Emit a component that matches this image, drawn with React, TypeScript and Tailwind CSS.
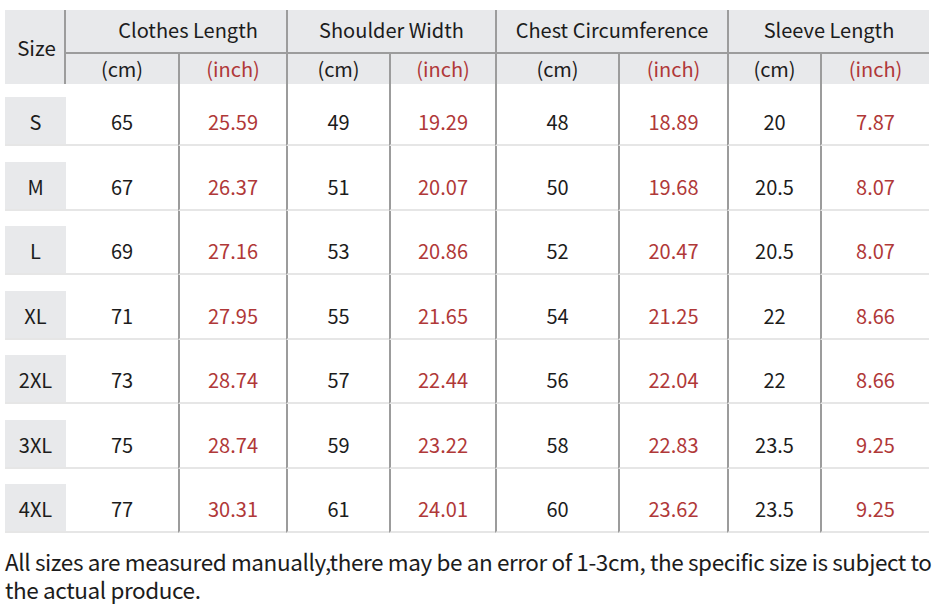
import React from 'react'

const groups = ['Clothes Length', 'Shoulder Width', 'Chest Circumference', 'Sleeve Length']

const rows: [string, string, string, string, string, string, string, string, string][] = [
  ['S', '65', '25.59', '49', '19.29', '48', '18.89', '20', '7.87'],
  ['M', '67', '26.37', '51', '20.07', '50', '19.68', '20.5', '8.07'],
  ['L', '69', '27.16', '53', '20.86', '52', '20.47', '20.5', '8.07'],
  ['XL', '71', '27.95', '55', '21.65', '54', '21.25', '22', '8.66'],
  ['2XL', '73', '28.74', '57', '22.44', '56', '22.04', '22', '8.66'],
  ['3XL', '75', '28.74', '59', '23.22', '58', '22.83', '23.5', '9.25'],
  ['4XL', '77', '30.31', '61', '24.01', '60', '23.62', '23.5', '9.25'],
]

const App = () => {
  return (
    <div
      className="w-[943px] h-[607px] bg-white text-[#1c1c1c] overflow-hidden"
      style={{ fontFamily: '"Noto Sans CJK SC", "Noto Sans", sans-serif' }}
    >
      <div className="ml-[5px] pt-[10px] w-[924px] grid grid-cols-[61px_112px_108px_103px_106px_123px_109px_93px_109px]">
        {/* header */}
        <div className="row-span-2 bg-[#e8e9eb] border-r-2 border-[#9c9c9c] flex items-center justify-center text-[20.5px] pl-[4px]">
          Size
        </div>
        {groups.map((g, i) => (
          <div
            key={g}
            className={`col-span-2 h-[44px] bg-[#e8e9eb] border-b-2 border-[#9c9c9c] flex items-center justify-center text-[20px] pb-[2px] ${i > 0 ? 'border-l-2' : 'pl-[24px]'}`}
          >
            {g}
          </div>
        ))}
        {groups.map((g, i) => (
          <React.Fragment key={g + 'u'}>
            <div
              className={`h-[30px] bg-[#e8e9eb] border-[#9c9c9c] flex items-center justify-center text-[20px] ${i > 0 ? 'border-l-2' : ''}`}
            >
              (cm)
            </div>
            <div className="h-[30px] bg-[#e8e9eb] border-l-2 border-[#9c9c9c] flex items-center justify-center text-[20px] text-[#b03838]">
              (inch)
            </div>
          </React.Fragment>
        ))}

        {/* body */}
        {rows.map((r, ri) =>
          r.map((v, ci) => (
            <div
              key={ri + '-' + ci}
              className={`${ri === 0 ? 'pt-[13px]' : 'pt-[15.5px]'} border-b-2 border-b-[#e6e6e6] ${ci > 1 ? 'border-l-2 border-l-[#9c9c9c]' : ''}`}
            >
              <div
                className={`h-[47px] flex items-center justify-center text-[20px] pt-[3px] ${ci === 0 ? 'bg-[#e8e9eb]' : ''} ${ci > 0 && ci % 2 === 0 ? 'text-[#b03838]' : ''}`}
              >
                {v}
              </div>
            </div>
          ))
        )}
      </div>

      <p className="ml-[5px] mt-[14px] w-[936px] text-[22.5px] leading-[28px] text-[#1c1c1c] tracking-[-0.4px]">
        All sizes are measured manually,there may be an error of 1-3cm, the specific size is subject to the actual produce.
      </p>
    </div>
  )
}

export default App
